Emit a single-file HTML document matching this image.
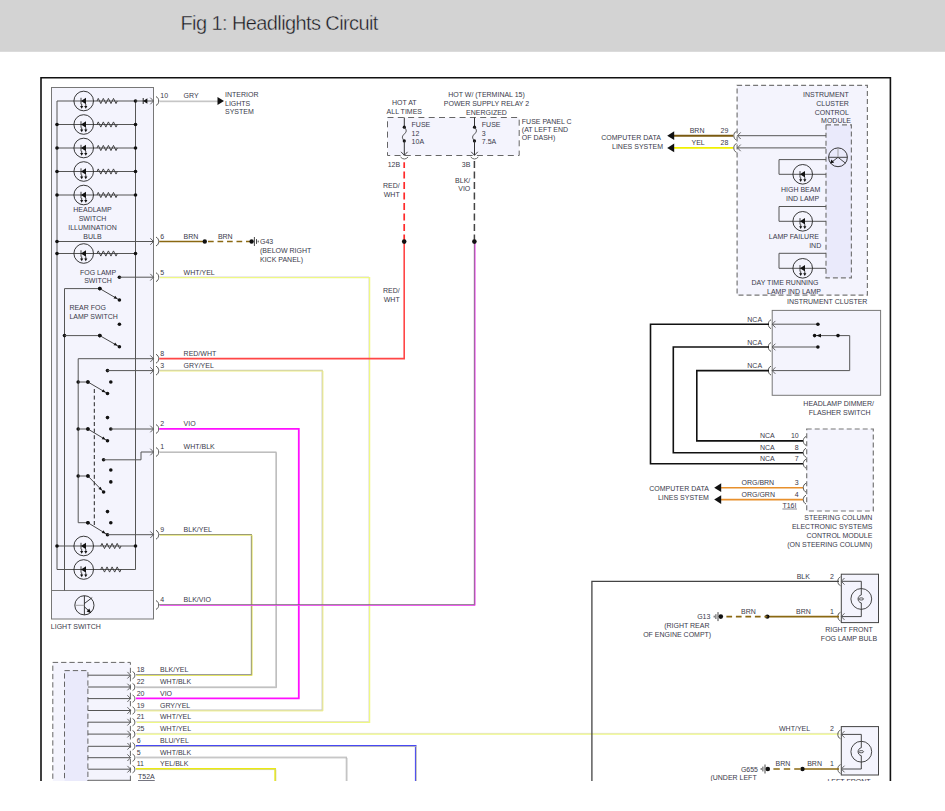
<!DOCTYPE html>
<html><head><meta charset="utf-8"><title>Headlights Circuit</title>
<style>html,body{margin:0;padding:0;background:#fff;width:945px;height:811px;overflow:hidden}
svg{display:block;font-family:"Liberation Sans",sans-serif}</style></head>
<body>
<svg width="945" height="811" viewBox="0 0 945 811" font-family="&quot;Liberation Sans&quot;, sans-serif">
<rect x="0" y="0" width="945" height="811" fill="#fff"/>
<rect x="0" y="0" width="945" height="51.8" fill="#d3d3d3"/>
<text x="180.5" y="30.2" font-size="20" letter-spacing="-0.6" fill="#1c1c24" stroke="#d3d3d3" stroke-width="0.4">Fig 1: Headlights Circuit</text>
<polyline points="41,781 41,77.7 890.4,77.7 890.4,781" fill="none" stroke="#111" stroke-width="1.6"/>
<rect x="51.5" y="87.5" width="102" height="531.5" fill="#f4f4fd" stroke="#777" stroke-width="1"/>
<line x1="51.5" y1="590.5" x2="153.5" y2="590.5" stroke="#777" stroke-width="1"/>
<line x1="57" y1="101" x2="57" y2="569.5" stroke="#555" stroke-width="1"/>
<line x1="135.5" y1="101" x2="135.5" y2="569.5" stroke="#555" stroke-width="1"/>
<line x1="57" y1="101" x2="135.5" y2="101" stroke="#555" stroke-width="1"/>
<circle cx="83.7" cy="101" r="9.8" fill="none" stroke="#222" stroke-width="0.9"/>
<path d="M81.0,97.8 V104.2" stroke="#111" stroke-width="0.8"/>
<path d="M81.0,101 L86.0,97.7 V104.3 Z" fill="#111"/>
<path d="M81.7,104 V106.5" stroke="#111" stroke-width="0.8"/>
<path d="M80.10000000000001,106 L83.3,106 L81.7,108.8 Z" fill="#111"/>
<path d="M85.8,104 V106.5" stroke="#111" stroke-width="0.8"/>
<path d="M84.2,106 L87.39999999999999,106 L85.8,108.8 Z" fill="#111"/>
<polyline points="97,101 98.27,98.4 100.81,103.6 103.34,98.4 105.88,103.6 108.42,98.4 110.96,103.6 113.49,98.4 116.03,103.6 117.3,101" fill="none" stroke="#333" stroke-width="0.9"/>
<line x1="57" y1="124.5" x2="135.5" y2="124.5" stroke="#555" stroke-width="1"/>
<circle cx="83.7" cy="124.5" r="9.8" fill="none" stroke="#222" stroke-width="0.9"/>
<path d="M81.0,121.3 V127.7" stroke="#111" stroke-width="0.8"/>
<path d="M81.0,124.5 L86.0,121.2 V127.8 Z" fill="#111"/>
<path d="M81.7,127.5 V130.0" stroke="#111" stroke-width="0.8"/>
<path d="M80.10000000000001,129.5 L83.3,129.5 L81.7,132.3 Z" fill="#111"/>
<path d="M85.8,127.5 V130.0" stroke="#111" stroke-width="0.8"/>
<path d="M84.2,129.5 L87.39999999999999,129.5 L85.8,132.3 Z" fill="#111"/>
<polyline points="97,124.5 98.27,121.9 100.81,127.1 103.34,121.9 105.88,127.1 108.42,121.9 110.96,127.1 113.49,121.9 116.03,127.1 117.3,124.5" fill="none" stroke="#333" stroke-width="0.9"/>
<circle cx="57" cy="124.5" r="1.8" fill="#111"/>
<circle cx="135.5" cy="124.5" r="1.8" fill="#111"/>
<line x1="57" y1="148" x2="135.5" y2="148" stroke="#555" stroke-width="1"/>
<circle cx="83.7" cy="148" r="9.8" fill="none" stroke="#222" stroke-width="0.9"/>
<path d="M81.0,144.8 V151.2" stroke="#111" stroke-width="0.8"/>
<path d="M81.0,148 L86.0,144.7 V151.3 Z" fill="#111"/>
<path d="M81.7,151 V153.5" stroke="#111" stroke-width="0.8"/>
<path d="M80.10000000000001,153 L83.3,153 L81.7,155.8 Z" fill="#111"/>
<path d="M85.8,151 V153.5" stroke="#111" stroke-width="0.8"/>
<path d="M84.2,153 L87.39999999999999,153 L85.8,155.8 Z" fill="#111"/>
<polyline points="97,148 98.27,145.4 100.81,150.6 103.34,145.4 105.88,150.6 108.42,145.4 110.96,150.6 113.49,145.4 116.03,150.6 117.3,148" fill="none" stroke="#333" stroke-width="0.9"/>
<circle cx="57" cy="148" r="1.8" fill="#111"/>
<circle cx="135.5" cy="148" r="1.8" fill="#111"/>
<line x1="57" y1="171.5" x2="135.5" y2="171.5" stroke="#555" stroke-width="1"/>
<circle cx="83.7" cy="171.5" r="9.8" fill="none" stroke="#222" stroke-width="0.9"/>
<path d="M81.0,168.3 V174.7" stroke="#111" stroke-width="0.8"/>
<path d="M81.0,171.5 L86.0,168.2 V174.8 Z" fill="#111"/>
<path d="M81.7,174.5 V177.0" stroke="#111" stroke-width="0.8"/>
<path d="M80.10000000000001,176.5 L83.3,176.5 L81.7,179.3 Z" fill="#111"/>
<path d="M85.8,174.5 V177.0" stroke="#111" stroke-width="0.8"/>
<path d="M84.2,176.5 L87.39999999999999,176.5 L85.8,179.3 Z" fill="#111"/>
<polyline points="97,171.5 98.27,168.9 100.81,174.1 103.34,168.9 105.88,174.1 108.42,168.9 110.96,174.1 113.49,168.9 116.03,174.1 117.3,171.5" fill="none" stroke="#333" stroke-width="0.9"/>
<circle cx="57" cy="171.5" r="1.8" fill="#111"/>
<circle cx="135.5" cy="171.5" r="1.8" fill="#111"/>
<line x1="57" y1="195" x2="135.5" y2="195" stroke="#555" stroke-width="1"/>
<circle cx="83.7" cy="195" r="9.8" fill="none" stroke="#222" stroke-width="0.9"/>
<path d="M81.0,191.8 V198.2" stroke="#111" stroke-width="0.8"/>
<path d="M81.0,195 L86.0,191.7 V198.3 Z" fill="#111"/>
<path d="M81.7,198 V200.5" stroke="#111" stroke-width="0.8"/>
<path d="M80.10000000000001,200 L83.3,200 L81.7,202.8 Z" fill="#111"/>
<path d="M85.8,198 V200.5" stroke="#111" stroke-width="0.8"/>
<path d="M84.2,200 L87.39999999999999,200 L85.8,202.8 Z" fill="#111"/>
<polyline points="97,195 98.27,192.4 100.81,197.6 103.34,192.4 105.88,197.6 108.42,192.4 110.96,197.6 113.49,192.4 116.03,197.6 117.3,195" fill="none" stroke="#333" stroke-width="0.9"/>
<circle cx="57" cy="195" r="1.8" fill="#111"/>
<circle cx="135.5" cy="195" r="1.8" fill="#111"/>
<line x1="57" y1="253.5" x2="135.5" y2="253.5" stroke="#555" stroke-width="1"/>
<circle cx="83.7" cy="253.5" r="9.8" fill="none" stroke="#222" stroke-width="0.9"/>
<path d="M81.0,250.3 V256.7" stroke="#111" stroke-width="0.8"/>
<path d="M81.0,253.5 L86.0,250.2 V256.8 Z" fill="#111"/>
<path d="M81.7,256.5 V259.0" stroke="#111" stroke-width="0.8"/>
<path d="M80.10000000000001,258.5 L83.3,258.5 L81.7,261.3 Z" fill="#111"/>
<path d="M85.8,256.5 V259.0" stroke="#111" stroke-width="0.8"/>
<path d="M84.2,258.5 L87.39999999999999,258.5 L85.8,261.3 Z" fill="#111"/>
<polyline points="97,253.5 98.27,250.9 100.81,256.1 103.34,250.9 105.88,256.1 108.42,250.9 110.96,256.1 113.49,250.9 116.03,256.1 117.3,253.5" fill="none" stroke="#333" stroke-width="0.9"/>
<circle cx="57" cy="253.5" r="1.8" fill="#111"/>
<circle cx="135.5" cy="253.5" r="1.8" fill="#111"/>
<line x1="57" y1="546" x2="135.5" y2="546" stroke="#555" stroke-width="1"/>
<circle cx="83.7" cy="546" r="9.8" fill="none" stroke="#222" stroke-width="0.9"/>
<path d="M81.0,542.8 V549.2" stroke="#111" stroke-width="0.8"/>
<path d="M81.0,546 L86.0,542.7 V549.3 Z" fill="#111"/>
<path d="M81.7,549 V551.5" stroke="#111" stroke-width="0.8"/>
<path d="M80.10000000000001,551 L83.3,551 L81.7,553.8 Z" fill="#111"/>
<path d="M85.8,549 V551.5" stroke="#111" stroke-width="0.8"/>
<path d="M84.2,551 L87.39999999999999,551 L85.8,553.8 Z" fill="#111"/>
<polyline points="100.7,546 101.97,543.4 104.51,548.6 107.04,543.4 109.58,548.6 112.12,543.4 114.66,548.6 117.19,543.4 119.73,548.6 121,546" fill="none" stroke="#333" stroke-width="0.9"/>
<circle cx="57" cy="546" r="1.8" fill="#111"/>
<circle cx="135.5" cy="546" r="1.8" fill="#111"/>
<line x1="57" y1="569.5" x2="135.5" y2="569.5" stroke="#555" stroke-width="1"/>
<circle cx="83.7" cy="569.5" r="9.8" fill="none" stroke="#222" stroke-width="0.9"/>
<path d="M81.0,566.3 V572.7" stroke="#111" stroke-width="0.8"/>
<path d="M81.0,569.5 L86.0,566.2 V572.8 Z" fill="#111"/>
<path d="M81.7,572.5 V575.0" stroke="#111" stroke-width="0.8"/>
<path d="M80.10000000000001,574.5 L83.3,574.5 L81.7,577.3 Z" fill="#111"/>
<path d="M85.8,572.5 V575.0" stroke="#111" stroke-width="0.8"/>
<path d="M84.2,574.5 L87.39999999999999,574.5 L85.8,577.3 Z" fill="#111"/>
<polyline points="100.7,569.5 101.97,566.9 104.51,572.1 107.04,566.9 109.58,572.1 112.12,566.9 114.66,572.1 117.19,566.9 119.73,572.1 121,569.5" fill="none" stroke="#333" stroke-width="0.9"/>
<circle cx="135.5" cy="101" r="1.8" fill="#111"/>
<line x1="135.5" y1="101" x2="153.5" y2="101" stroke="#555" stroke-width="1"/>
<path d="M143.2,98 V104" stroke="#111" stroke-width="0.9"/>
<path d="M143.2,101 L147.4,98.2 V103.8 Z" fill="#111"/>
<text x="92.5" y="212.3" text-anchor="middle" font-size="7" fill="#3a3a4a">HEADLAMP</text>
<text x="92.5" y="221.2" text-anchor="middle" font-size="7" fill="#3a3a4a">SWITCH</text>
<text x="92.5" y="230.1" text-anchor="middle" font-size="7" fill="#3a3a4a">ILLUMINATION</text>
<text x="92.5" y="239.0" text-anchor="middle" font-size="7" fill="#3a3a4a">BULB</text>
<line x1="57" y1="241.5" x2="153.5" y2="241.5" stroke="#555" stroke-width="1"/>
<circle cx="57" cy="241.5" r="1.8" fill="#111"/>
<text x="98" y="274.8" text-anchor="middle" font-size="7" fill="#3a3a4a">FOG LAMP</text>
<text x="98" y="283.0" text-anchor="middle" font-size="7" fill="#3a3a4a">SWITCH</text>
<circle cx="119.4" cy="277.2" r="1.8" fill="#111"/>
<line x1="119.4" y1="277.2" x2="153.5" y2="277.2" stroke="#555" stroke-width="1"/>
<line x1="64.5" y1="288.6" x2="64.5" y2="590.5" stroke="#555" stroke-width="1"/>
<line x1="64.5" y1="288.6" x2="99.8" y2="288.6" stroke="#555" stroke-width="1"/>
<circle cx="99.8" cy="288.6" r="1.8" fill="#111"/>
<line x1="99.8" y1="288.6" x2="119.4" y2="300" stroke="#333" stroke-width="0.9"/>
<path d="M117.33,298.79 L113.58,298.47 L115.19,295.70 Z" fill="#111"/>
<circle cx="99.8" cy="288.6" r="1.8" fill="#111"/>
<circle cx="119.4" cy="300" r="1.8" fill="#111"/>
<text x="69.4" y="310.0" font-size="7" fill="#3a3a4a">REAR FOG</text>
<text x="69.4" y="318.9" font-size="7" fill="#3a3a4a">LAMP SWITCH</text>
<circle cx="119.4" cy="324.2" r="1.8" fill="#111"/>
<circle cx="64.5" cy="335.6" r="1.8" fill="#111"/>
<line x1="64.5" y1="335.6" x2="99.8" y2="335.6" stroke="#555" stroke-width="1"/>
<circle cx="99.8" cy="335.6" r="1.8" fill="#111"/>
<line x1="99.8" y1="335.6" x2="119.4" y2="346.8" stroke="#333" stroke-width="0.9"/>
<path d="M117.32,345.61 L113.57,345.31 L115.16,342.53 Z" fill="#111"/>
<circle cx="99.8" cy="335.6" r="1.8" fill="#111"/>
<circle cx="119.4" cy="346.8" r="1.8" fill="#111"/>
<line x1="78.2" y1="358.7" x2="78.2" y2="522.7" stroke="#555" stroke-width="1"/>
<line x1="78.2" y1="358.7" x2="153.5" y2="358.7" stroke="#555" stroke-width="1"/>
<circle cx="107.5" cy="370.6" r="1.8" fill="#111"/>
<line x1="107.5" y1="370.6" x2="153.5" y2="370.6" stroke="#555" stroke-width="1"/>
<circle cx="110.8" cy="382" r="1.8" fill="#111"/>
<circle cx="78.2" cy="382" r="1.8" fill="#111"/>
<circle cx="87.9" cy="382" r="1.8" fill="#111"/>
<line x1="78.2" y1="382" x2="87.9" y2="382" stroke="#555" stroke-width="1"/>
<line x1="87.9" y1="382" x2="107.5" y2="393.5" stroke="#333" stroke-width="0.9"/>
<path d="M105.43,392.29 L101.69,391.94 L103.31,389.18 Z" fill="#111"/>
<circle cx="87.9" cy="382" r="1.8" fill="#111"/>
<circle cx="107.5" cy="393.5" r="1.8" fill="#111"/>
<line x1="94.3" y1="389" x2="94.3" y2="527" stroke="#222" stroke-width="1" stroke-dasharray="4,2.6"/>
<circle cx="107.5" cy="417.6" r="1.8" fill="#111"/>
<circle cx="78.2" cy="429" r="1.8" fill="#111"/>
<circle cx="87.9" cy="429" r="1.8" fill="#111"/>
<line x1="78.2" y1="429" x2="87.9" y2="429" stroke="#555" stroke-width="1"/>
<circle cx="110.8" cy="429" r="1.8" fill="#111"/>
<line x1="110.8" y1="429" x2="153.5" y2="429" stroke="#555" stroke-width="1"/>
<line x1="87.9" y1="429" x2="107.5" y2="440.8" stroke="#333" stroke-width="0.9"/>
<path d="M105.44,439.56 L101.71,439.18 L103.36,436.44 Z" fill="#111"/>
<circle cx="87.9" cy="429" r="1.8" fill="#111"/>
<circle cx="107.5" cy="440.8" r="1.8" fill="#111"/>
<circle cx="103.6" cy="459.8" r="1.8" fill="#111"/>
<polyline points="103.6,459.8 141,459.8 141,452 153.5,452" fill="none" stroke="#555" stroke-width="1"/>
<circle cx="110.8" cy="470" r="1.8" fill="#111"/>
<circle cx="110.8" cy="481.9" r="1.8" fill="#111"/>
<circle cx="78.2" cy="476" r="1.8" fill="#111"/>
<circle cx="87.9" cy="476" r="1.8" fill="#111"/>
<line x1="78.2" y1="476" x2="87.9" y2="476" stroke="#555" stroke-width="1"/>
<line x1="87.9" y1="476" x2="103.6" y2="492" stroke="#333" stroke-width="0.9"/>
<path d="M101.92,490.29 L98.40,488.98 L100.68,486.74 Z" fill="#111"/>
<circle cx="87.9" cy="476" r="1.8" fill="#111"/>
<circle cx="103.6" cy="492" r="1.8" fill="#111"/>
<circle cx="107.5" cy="511.6" r="1.8" fill="#111"/>
<circle cx="110.8" cy="522.7" r="1.8" fill="#111"/>
<line x1="78.2" y1="522.7" x2="87.9" y2="522.7" stroke="#555" stroke-width="1"/>
<circle cx="87.9" cy="522.7" r="1.8" fill="#111"/>
<line x1="87.9" y1="522.7" x2="107.5" y2="534.7" stroke="#333" stroke-width="0.9"/>
<path d="M105.45,533.45 L101.72,533.04 L103.39,530.31 Z" fill="#111"/>
<circle cx="87.9" cy="522.7" r="1.8" fill="#111"/>
<circle cx="107.5" cy="534.7" r="1.8" fill="#111"/>
<line x1="107.5" y1="534.7" x2="153.5" y2="534.7" stroke="#555" stroke-width="1"/>
<circle cx="84.4" cy="605.3" r="9.6" fill="none" stroke="#222" stroke-width="0.9"/>
<path d="M84.4,595.8 V614.8" stroke="#222" stroke-width="0.9" fill="none"/>
<path d="M75,605.3 H84.4" stroke="#999" stroke-width="0.9" fill="none"/>
<path d="M84.4,603.5 L92.2,597.6 M84.4,606.8 L89.5,611.4" stroke="#222" stroke-width="0.9" fill="none"/>
<path d="M91.2,613.2 L86.6,611.6 L89.3,608.6 Z" fill="#111"/>
<text x="50.8" y="629.2" font-size="7" fill="#3a3a4a">LIGHT SWITCH</text>
<polyline points="150.3,97.7 153.5,101 150.3,104.3" fill="none" stroke="#555" stroke-width="0.9"/>
<path d="M156,96.6 C159.6,98 159.6,104 156,105.4" fill="none" stroke="#444" stroke-width="0.9"/>
<text x="160.3" y="98.4" font-size="7" fill="#3a3a4a">10</text>
<text x="183.6" y="98.4" font-size="7" fill="#3a3a4a">GRY</text>
<polyline points="150.3,238.2 153.5,241.5 150.3,244.8" fill="none" stroke="#555" stroke-width="0.9"/>
<path d="M156,237.1 C159.6,238.5 159.6,244.5 156,245.9" fill="none" stroke="#444" stroke-width="0.9"/>
<text x="160.3" y="238.9" font-size="7" fill="#3a3a4a">6</text>
<text x="183.6" y="238.9" font-size="7" fill="#3a3a4a">BRN</text>
<polyline points="150.3,273.9 153.5,277.2 150.3,280.5" fill="none" stroke="#555" stroke-width="0.9"/>
<path d="M156,272.8 C159.6,274.2 159.6,280.2 156,281.59999999999997" fill="none" stroke="#444" stroke-width="0.9"/>
<text x="160.3" y="274.59999999999997" font-size="7" fill="#3a3a4a">5</text>
<text x="183.6" y="274.59999999999997" font-size="7" fill="#3a3a4a">WHT/YEL</text>
<polyline points="150.3,355.4 153.5,358.7 150.3,362.0" fill="none" stroke="#555" stroke-width="0.9"/>
<path d="M156,354.3 C159.6,355.7 159.6,361.7 156,363.09999999999997" fill="none" stroke="#444" stroke-width="0.9"/>
<text x="160.3" y="356.09999999999997" font-size="7" fill="#3a3a4a">8</text>
<text x="183.6" y="356.09999999999997" font-size="7" fill="#3a3a4a">RED/WHT</text>
<polyline points="150.3,367.3 153.5,370.6 150.3,373.90000000000003" fill="none" stroke="#555" stroke-width="0.9"/>
<path d="M156,366.20000000000005 C159.6,367.6 159.6,373.6 156,375.0" fill="none" stroke="#444" stroke-width="0.9"/>
<text x="160.3" y="368.0" font-size="7" fill="#3a3a4a">3</text>
<text x="183.6" y="368.0" font-size="7" fill="#3a3a4a">GRY/YEL</text>
<polyline points="150.3,425.7 153.5,429 150.3,432.3" fill="none" stroke="#555" stroke-width="0.9"/>
<path d="M156,424.6 C159.6,426 159.6,432 156,433.4" fill="none" stroke="#444" stroke-width="0.9"/>
<text x="160.3" y="426.4" font-size="7" fill="#3a3a4a">2</text>
<text x="183.6" y="426.4" font-size="7" fill="#3a3a4a">VIO</text>
<polyline points="150.3,448.7 153.5,452 150.3,455.3" fill="none" stroke="#555" stroke-width="0.9"/>
<path d="M156,447.6 C159.6,449 159.6,455 156,456.4" fill="none" stroke="#444" stroke-width="0.9"/>
<text x="160.3" y="449.4" font-size="7" fill="#3a3a4a">1</text>
<text x="183.6" y="449.4" font-size="7" fill="#3a3a4a">WHT/BLK</text>
<polyline points="150.3,531.4000000000001 153.5,534.7 150.3,538.0" fill="none" stroke="#555" stroke-width="0.9"/>
<path d="M156,530.3000000000001 C159.6,531.7 159.6,537.7 156,539.1" fill="none" stroke="#444" stroke-width="0.9"/>
<text x="160.3" y="532.1" font-size="7" fill="#3a3a4a">9</text>
<text x="183.6" y="532.1" font-size="7" fill="#3a3a4a">BLK/YEL</text>
<path d="M156,600.6 C159.6,602 159.6,608 156,609.4" fill="none" stroke="#444" stroke-width="0.9"/>
<text x="160.3" y="602.4" font-size="7" fill="#3a3a4a">4</text>
<text x="183.6" y="602.4" font-size="7" fill="#3a3a4a">BLK/VIO</text>
<polyline points="159.2,101 218,101" fill="none" stroke="#c8c8c8" stroke-width="1.2"/>
<polyline points="159.9,101.7 218.7,101.7" fill="none" stroke="#b0b0b0" stroke-width="0.7"/>
<path d="M224,101 L217.5,97 V105 Z" fill="#111"/>
<text x="225" y="97.2" font-size="7" fill="#3a3a4a">INTERIOR</text>
<text x="225" y="105.8" font-size="7" fill="#3a3a4a">LIGHTS</text>
<text x="225" y="114.4" font-size="7" fill="#3a3a4a">SYSTEM</text>
<line x1="159.2" y1="241.5" x2="204.8" y2="241.5" stroke="#8a6812" stroke-width="1.6"/>
<circle cx="204.8" cy="241.5" r="2.2" fill="#111"/>
<line x1="208" y1="241.5" x2="251.6" y2="241.5" stroke="#8a6812" stroke-width="1.6" stroke-dasharray="5.7,3.8"/>
<text x="217.9" y="238.9" font-size="7" fill="#3a3a4a">BRN</text>
<circle cx="251.6" cy="241.5" r="2.2" fill="#111"/>
<path d="M254.4,237.0 V246.0 M256.5,239.1 V243.9 M258.2,240.6 V242.4" stroke="#333" stroke-width="0.9"/>
<text x="260" y="244.1" font-size="7" fill="#3a3a4a">G43</text>
<text x="260" y="252.8" font-size="7" fill="#3a3a4a">(BELOW RIGHT</text>
<text x="260" y="261.5" font-size="7" fill="#3a3a4a">KICK PANEL)</text>
<polyline points="159.2,276.9 368.9,276.9 368.9,721.6 136,721.6" fill="none" stroke="#dcd6dc" stroke-width="0.9"/>
<polyline points="159.9,277.6 369.6,277.6 369.6,722.3 136.7,722.3" fill="none" stroke="#eef884" stroke-width="1.3"/>
<polyline points="159.2,358.6 404.2,358.6 404.2,241.6" fill="none" stroke="#ff4646" stroke-width="1.6"/>
<line x1="404.2" y1="241.6" x2="404.2" y2="162.3" stroke="#ff2a2a" stroke-width="1.7" stroke-dasharray="7,3.5"/>
<circle cx="404.2" cy="241.6" r="2.3" fill="#111"/>
<polyline points="159.2,370.3 322.2,370.3 322.2,710.2 136,710.2" fill="none" stroke="#c4c4c4" stroke-width="1.2"/>
<polyline points="159.9,371.0 322.9,371.0 322.9,710.9 136.7,710.9" fill="none" stroke="#eeee80" stroke-width="1.0"/>
<polyline points="159.2,428.8 298.8,428.8 298.8,698.4 136,698.4" fill="none" stroke="#ff10ff" stroke-width="1.8"/>
<polyline points="159.2,451.8 275.8,451.8 275.8,687 136,687" fill="none" stroke="#cdcdcd" stroke-width="1.3"/>
<polyline points="159.9,452.5 276.5,452.5 276.5,687.7 136.7,687.7" fill="none" stroke="#b4b4b4" stroke-width="0.8"/>
<polyline points="159.2,534.5 251.4,534.5 251.4,674.8 136,674.8" fill="none" stroke="#7c7c7c" stroke-width="1.1"/>
<polyline points="159.9,535.2 252.1,535.2 252.1,675.5 136.7,675.5" fill="none" stroke="#e4e466" stroke-width="1.0"/>
<polyline points="159.2,604.7 474.4,604.7 474.4,241.6" fill="none" stroke="#6a6a6a" stroke-width="1.1"/>
<polyline points="159.9,605.4 475.1,605.4 475.1,242.3" fill="none" stroke="#f050f0" stroke-width="1.0"/>
<line x1="474.4" y1="241.6" x2="474.4" y2="159.3" stroke="#444" stroke-width="1.5" stroke-dasharray="7,3.5"/>
<circle cx="474.4" cy="241.6" r="2.3" fill="#111"/>
<polyline points="136,733.4 839,733.4" fill="none" stroke="#dcd6dc" stroke-width="0.9"/>
<polyline points="136.7,734.1 839.7,734.1" fill="none" stroke="#eef884" stroke-width="1.3"/>
<polyline points="136,745.9 415.7,745.9 415.7,781" fill="none" stroke="#4848f4" stroke-width="1.6"/>
<polyline points="136.7,746.6 416.4,746.6 416.4,781.7" fill="none" stroke="#e8e890" stroke-width="0.6"/>
<polyline points="136,757.2 346.3,757.2 346.3,781" fill="none" stroke="#cdcdcd" stroke-width="1.3"/>
<polyline points="136.7,757.9 347.0,757.9 347.0,781.7" fill="none" stroke="#b4b4b4" stroke-width="0.8"/>
<polyline points="136,768.9 275.2,768.9 275.2,781" fill="none" stroke="#eaea10" stroke-width="1.7"/>
<polyline points="136.7,769.6 275.9,769.6 275.9,781.7" fill="none" stroke="#c8c8a0" stroke-width="0.6"/>
<rect x="52.8" y="662.4" width="77.6" height="130" fill="#f4f4fd" stroke="#666" stroke-width="1" stroke-dasharray="5.3,3"/>
<rect x="64.5" y="670.6" width="23.4" height="130" fill="#eaeafb" stroke="#666" stroke-width="1" stroke-dasharray="5.3,3"/>
<line x1="87.9" y1="675.2" x2="130.8" y2="675.2" stroke="#555" stroke-width="1"/>
<polyline points="127.39999999999999,671.9000000000001 130.6,675.2 127.39999999999999,678.5" fill="none" stroke="#555" stroke-width="0.9"/>
<path d="M132.6,671.6 C135.6,672.8000000000001 135.6,677.6 132.6,678.8000000000001" fill="none" stroke="#444" stroke-width="0.9"/>
<text x="136.7" y="672.3000000000001" font-size="7" fill="#3a3a4a">18</text>
<text x="160" y="672.3000000000001" font-size="7" fill="#3a3a4a">BLK/YEL</text>
<line x1="87.9" y1="687" x2="130.8" y2="687" stroke="#555" stroke-width="1"/>
<polyline points="127.39999999999999,683.7 130.6,687 127.39999999999999,690.3" fill="none" stroke="#555" stroke-width="0.9"/>
<path d="M132.6,683.4 C135.6,684.6 135.6,689.4 132.6,690.6" fill="none" stroke="#444" stroke-width="0.9"/>
<text x="136.7" y="684.1" font-size="7" fill="#3a3a4a">22</text>
<text x="160" y="684.1" font-size="7" fill="#3a3a4a">WHT/BLK</text>
<line x1="87.9" y1="698.6" x2="130.8" y2="698.6" stroke="#555" stroke-width="1"/>
<polyline points="127.39999999999999,695.3000000000001 130.6,698.6 127.39999999999999,701.9" fill="none" stroke="#555" stroke-width="0.9"/>
<path d="M132.6,695.0 C135.6,696.2 135.6,701.0 132.6,702.2" fill="none" stroke="#444" stroke-width="0.9"/>
<text x="136.7" y="695.7" font-size="7" fill="#3a3a4a">20</text>
<text x="160" y="695.7" font-size="7" fill="#3a3a4a">VIO</text>
<line x1="87.9" y1="710.5" x2="130.8" y2="710.5" stroke="#555" stroke-width="1"/>
<polyline points="127.39999999999999,707.2 130.6,710.5 127.39999999999999,713.8" fill="none" stroke="#555" stroke-width="0.9"/>
<path d="M132.6,706.9 C135.6,708.1 135.6,712.9 132.6,714.1" fill="none" stroke="#444" stroke-width="0.9"/>
<text x="136.7" y="707.6" font-size="7" fill="#3a3a4a">19</text>
<text x="160" y="707.6" font-size="7" fill="#3a3a4a">GRY/YEL</text>
<line x1="87.9" y1="722.2" x2="130.8" y2="722.2" stroke="#555" stroke-width="1"/>
<polyline points="127.39999999999999,718.9000000000001 130.6,722.2 127.39999999999999,725.5" fill="none" stroke="#555" stroke-width="0.9"/>
<path d="M132.6,718.6 C135.6,719.8000000000001 135.6,724.6 132.6,725.8000000000001" fill="none" stroke="#444" stroke-width="0.9"/>
<text x="136.7" y="719.3000000000001" font-size="7" fill="#3a3a4a">21</text>
<text x="160" y="719.3000000000001" font-size="7" fill="#3a3a4a">WHT/YEL</text>
<line x1="87.9" y1="734.1" x2="130.8" y2="734.1" stroke="#555" stroke-width="1"/>
<polyline points="127.39999999999999,730.8000000000001 130.6,734.1 127.39999999999999,737.4" fill="none" stroke="#555" stroke-width="0.9"/>
<path d="M132.6,730.5 C135.6,731.7 135.6,736.5 132.6,737.7" fill="none" stroke="#444" stroke-width="0.9"/>
<text x="136.7" y="731.2" font-size="7" fill="#3a3a4a">25</text>
<text x="160" y="731.2" font-size="7" fill="#3a3a4a">WHT/YEL</text>
<line x1="87.9" y1="746.3" x2="130.8" y2="746.3" stroke="#555" stroke-width="1"/>
<polyline points="127.39999999999999,743.0 130.6,746.3 127.39999999999999,749.5999999999999" fill="none" stroke="#555" stroke-width="0.9"/>
<path d="M132.6,742.6999999999999 C135.6,743.9 135.6,748.6999999999999 132.6,749.9" fill="none" stroke="#444" stroke-width="0.9"/>
<text x="136.7" y="743.4" font-size="7" fill="#3a3a4a">6</text>
<text x="160" y="743.4" font-size="7" fill="#3a3a4a">BLU/YEL</text>
<line x1="87.9" y1="757.7" x2="130.8" y2="757.7" stroke="#555" stroke-width="1"/>
<polyline points="127.39999999999999,754.4000000000001 130.6,757.7 127.39999999999999,761.0" fill="none" stroke="#555" stroke-width="0.9"/>
<path d="M132.6,754.1 C135.6,755.3000000000001 135.6,760.1 132.6,761.3000000000001" fill="none" stroke="#444" stroke-width="0.9"/>
<text x="136.7" y="754.8000000000001" font-size="7" fill="#3a3a4a">5</text>
<text x="160" y="754.8000000000001" font-size="7" fill="#3a3a4a">WHT/BLK</text>
<line x1="87.9" y1="769.2" x2="130.8" y2="769.2" stroke="#555" stroke-width="1"/>
<polyline points="127.39999999999999,765.9000000000001 130.6,769.2 127.39999999999999,772.5" fill="none" stroke="#555" stroke-width="0.9"/>
<path d="M132.6,765.6 C135.6,766.8000000000001 135.6,771.6 132.6,772.8000000000001" fill="none" stroke="#444" stroke-width="0.9"/>
<text x="136.7" y="766.3000000000001" font-size="7" fill="#3a3a4a">11</text>
<text x="160" y="766.3000000000001" font-size="7" fill="#3a3a4a">YEL/BLK</text>
<text x="138" y="779.3" font-size="7" fill="#3a3a4a"><tspan text-decoration="underline">T52A</tspan></text>
<rect x="387.5" y="117.5" width="131.7" height="38" fill="#f4f4fd" stroke="#666" stroke-width="1" stroke-dasharray="6,4.3"/>
<line x1="404.3" y1="117.5" x2="404.3" y2="127.2" stroke="#333" stroke-width="1"/>
<circle cx="404.3" cy="127.2" r="1.6" fill="#111"/>
<path d="M404.3,127.2 C407.3,130.5 406.3,132 404.3,134 C402.3,136 401.3,137.5 404.3,140.9" fill="none" stroke="#333" stroke-width="0.9"/>
<circle cx="404.3" cy="140.9" r="1.6" fill="#111"/>
<line x1="404.3" y1="140.9" x2="404.3" y2="155.3" stroke="#333" stroke-width="1"/>
<polyline points="401.0,151.8 404.3,155.3 407.6,151.8" fill="none" stroke="#333" stroke-width="0.9"/>
<path d="M400.5,157 Q404.3,161 408.1,157" fill="none" stroke="#555" stroke-width="0.9"/>
<text x="411.6" y="127.0" font-size="7" fill="#3a3a4a">FUSE</text>
<text x="411.6" y="135.6" font-size="7" fill="#3a3a4a">12</text>
<text x="411.6" y="144.2" font-size="7" fill="#3a3a4a">10A</text>
<line x1="474.5" y1="117.5" x2="474.5" y2="127.2" stroke="#333" stroke-width="1"/>
<circle cx="474.5" cy="127.2" r="1.6" fill="#111"/>
<path d="M474.5,127.2 C477.5,130.5 476.5,132 474.5,134 C472.5,136 471.5,137.5 474.5,140.9" fill="none" stroke="#333" stroke-width="0.9"/>
<circle cx="474.5" cy="140.9" r="1.6" fill="#111"/>
<line x1="474.5" y1="140.9" x2="474.5" y2="155.3" stroke="#333" stroke-width="1"/>
<polyline points="471.2,151.8 474.5,155.3 477.8,151.8" fill="none" stroke="#333" stroke-width="0.9"/>
<path d="M470.7,157 Q474.5,161 478.3,157" fill="none" stroke="#555" stroke-width="0.9"/>
<text x="481.8" y="127.0" font-size="7" fill="#3a3a4a">FUSE</text>
<text x="481.8" y="135.6" font-size="7" fill="#3a3a4a">3</text>
<text x="481.8" y="144.2" font-size="7" fill="#3a3a4a">7.5A</text>
<text x="387.7" y="167.2" font-size="7" fill="#3a3a4a">12B</text>
<text x="470.3" y="167.2" text-anchor="end" font-size="7" fill="#3a3a4a">3B</text>
<text x="399.7" y="188.1" text-anchor="end" font-size="7" fill="#3a3a4a">RED/</text>
<text x="399.7" y="197.2" text-anchor="end" font-size="7" fill="#3a3a4a">WHT</text>
<text x="470.3" y="182.5" text-anchor="end" font-size="7" fill="#3a3a4a">BLK/</text>
<text x="470.3" y="191.4" text-anchor="end" font-size="7" fill="#3a3a4a">VIO</text>
<text x="399.7" y="293.3" text-anchor="end" font-size="7" fill="#3a3a4a">RED/</text>
<text x="399.7" y="302.1" text-anchor="end" font-size="7" fill="#3a3a4a">WHT</text>
<text x="404.3" y="105.0" text-anchor="middle" font-size="7" fill="#3a3a4a">HOT AT</text>
<text x="404.3" y="113.9" text-anchor="middle" font-size="7" fill="#3a3a4a">ALL TIMES</text>
<text x="486.5" y="97.1" text-anchor="middle" font-size="7" fill="#3a3a4a">HOT W/ (TERMINAL 15)</text>
<text x="486.5" y="106.0" text-anchor="middle" font-size="7" fill="#3a3a4a">POWER SUPPLY RELAY 2</text>
<text x="486.5" y="114.9" text-anchor="middle" font-size="7" fill="#3a3a4a">ENERGIZED</text>
<text x="521.8" y="123.6" font-size="7" fill="#3a3a4a">FUSE PANEL C</text>
<text x="521.8" y="131.8" font-size="7" fill="#3a3a4a">(AT LEFT END</text>
<text x="521.8" y="140.0" font-size="7" fill="#3a3a4a">OF DASH)</text>
<rect x="737.1" y="85.4" width="130.3" height="209.8" fill="#f4f4fd" stroke="#777" stroke-width="1.2" stroke-dasharray="5,3"/>
<rect x="826" y="124.8" width="25.4" height="153.1" fill="#eaeafb" stroke="#777" stroke-width="1.2" stroke-dasharray="5,3"/>
<text x="848.9" y="97.1" text-anchor="end" font-size="7" fill="#3a3a4a">INSTRUMENT</text>
<text x="848.9" y="105.8" text-anchor="end" font-size="7" fill="#3a3a4a">CLUSTER</text>
<text x="848.9" y="114.5" text-anchor="end" font-size="7" fill="#3a3a4a">CONTROL</text>
<text x="851" y="123" text-anchor="end" font-size="7" fill="#3a3a4a">MODULE</text>
<line x1="673.6" y1="135.7" x2="733.3" y2="135.7" stroke="#7a5a10" stroke-width="1.9"/>
<path d="M667.2,135.7 L674.2,131.29999999999998 V140.1 Z" fill="#111"/>
<path d="M736.5,131.29999999999998 C732.9,132.7 732.9,138.7 736.5,140.1" fill="none" stroke="#444" stroke-width="0.9"/>
<polyline points="740.7,132.39999999999998 737.5,135.7 740.7,139.0" fill="none" stroke="#555" stroke-width="0.9"/>
<line x1="737.5" y1="135.7" x2="826" y2="135.7" stroke="#555" stroke-width="1"/>
<text x="689.7" y="132.5" font-size="7" fill="#3a3a4a">BRN</text>
<text x="720.6" y="132.5" font-size="7" fill="#3a3a4a">29</text>
<line x1="673.6" y1="147.9" x2="733.3" y2="147.9" stroke="#f0f000" stroke-width="1.9"/>
<path d="M667.2,147.9 L674.2,143.5 V152.3 Z" fill="#111"/>
<path d="M736.5,143.5 C732.9,144.9 732.9,150.9 736.5,152.3" fill="none" stroke="#444" stroke-width="0.9"/>
<polyline points="740.7,144.6 737.5,147.9 740.7,151.20000000000002" fill="none" stroke="#555" stroke-width="0.9"/>
<line x1="737.5" y1="147.9" x2="826" y2="147.9" stroke="#555" stroke-width="1"/>
<text x="691.5" y="144.70000000000002" font-size="7" fill="#3a3a4a">YEL</text>
<text x="720.6" y="144.70000000000002" font-size="7" fill="#3a3a4a">28</text>
<text x="660.9" y="139.8" text-anchor="end" font-size="7" fill="#3a3a4a">COMPUTER DATA</text>
<text x="663" y="149" text-anchor="end" font-size="7" fill="#3a3a4a">LINES SYSTEM</text>
<circle cx="838" cy="157.3" r="9.4" fill="none" stroke="#222" stroke-width="0.9"/>
<path d="M828.5,157.3 H847.4 M838,157.3 L845.5,163.2" stroke="#333" stroke-width="0.9" fill="none"/>
<path d="M838,148 V157.3" stroke="#999" stroke-width="0.9" fill="none"/>
<path d="M838,157.3 L832.5,161.5" stroke="#333" stroke-width="0.9" fill="none"/>
<path d="M830.2,163.4 L831.4,159.6 L834.2,162.4 Z" fill="#111"/>
<polyline points="826,159.6 779,159.6 779,174.3 826,174.3" fill="none" stroke="#555" stroke-width="1"/>
<circle cx="802.7" cy="174.3" r="9.8" fill="none" stroke="#222" stroke-width="0.9"/>
<path d="M800.0,171.10000000000002 V177.5" stroke="#111" stroke-width="0.8"/>
<path d="M800.0,174.3 L805.0,171.0 V177.60000000000002 Z" fill="#111"/>
<path d="M800.7,177.3 V179.8" stroke="#111" stroke-width="0.8"/>
<path d="M799.1,179.3 L802.3000000000001,179.3 L800.7,182.10000000000002 Z" fill="#111"/>
<path d="M804.8,177.3 V179.8" stroke="#111" stroke-width="0.8"/>
<path d="M803.1999999999999,179.3 L806.4,179.3 L804.8,182.10000000000002 Z" fill="#111"/>
<polyline points="826,206.5 779,206.5 779,221.3 826,221.3" fill="none" stroke="#555" stroke-width="1"/>
<circle cx="802.7" cy="221.3" r="9.8" fill="none" stroke="#222" stroke-width="0.9"/>
<path d="M800.0,218.10000000000002 V224.5" stroke="#111" stroke-width="0.8"/>
<path d="M800.0,221.3 L805.0,218.0 V224.60000000000002 Z" fill="#111"/>
<path d="M800.7,224.3 V226.8" stroke="#111" stroke-width="0.8"/>
<path d="M799.1,226.3 L802.3000000000001,226.3 L800.7,229.10000000000002 Z" fill="#111"/>
<path d="M804.8,224.3 V226.8" stroke="#111" stroke-width="0.8"/>
<path d="M803.1999999999999,226.3 L806.4,226.3 L804.8,229.10000000000002 Z" fill="#111"/>
<polyline points="826,253.3 779,253.3 779,268.3 826,268.3" fill="none" stroke="#555" stroke-width="1"/>
<circle cx="802.7" cy="268.3" r="9.8" fill="none" stroke="#222" stroke-width="0.9"/>
<path d="M800.0,265.1 V271.5" stroke="#111" stroke-width="0.8"/>
<path d="M800.0,268.3 L805.0,265.0 V271.6 Z" fill="#111"/>
<path d="M800.7,271.3 V273.8" stroke="#111" stroke-width="0.8"/>
<path d="M799.1,273.3 L802.3000000000001,273.3 L800.7,276.1 Z" fill="#111"/>
<path d="M804.8,271.3 V273.8" stroke="#111" stroke-width="0.8"/>
<path d="M803.1999999999999,273.3 L806.4,273.3 L804.8,276.1 Z" fill="#111"/>
<text x="800.6" y="192.1" text-anchor="middle" font-size="7" fill="#3a3a4a">HIGH BEAM</text>
<text x="802.6" y="201" text-anchor="middle" font-size="7" fill="#3a3a4a">IND LAMP</text>
<text x="818.9" y="239.1" text-anchor="end" font-size="7" fill="#3a3a4a">LAMP FAILURE</text>
<text x="821.2" y="248" text-anchor="end" font-size="7" fill="#3a3a4a">IND</text>
<text x="785" y="285.1" text-anchor="middle" font-size="7" fill="#3a3a4a">DAY TIME RUNNING</text>
<text x="794" y="293.7" text-anchor="middle" font-size="7" fill="#3a3a4a">LAMP IND LAMP</text>
<text x="867.4" y="304.1" text-anchor="end" font-size="7" fill="#3a3a4a">INSTRUMENT CLUSTER</text>
<rect x="772.2" y="310.4" width="108.4" height="84.9" fill="#f4f4fd" stroke="#777" stroke-width="1"/>
<path d="M771,319.8 C767.4,321.2 767.4,327.2 771,328.59999999999997" fill="none" stroke="#444" stroke-width="0.9"/>
<polyline points="775.4000000000001,320.9 772.2,324.2 775.4000000000001,327.5" fill="none" stroke="#555" stroke-width="0.9"/>
<text x="747.3" y="321.9" font-size="7" fill="#3a3a4a">NCA</text>
<path d="M771,342.6 C767.4,344 767.4,350 771,351.4" fill="none" stroke="#444" stroke-width="0.9"/>
<polyline points="775.4000000000001,343.7 772.2,347 775.4000000000001,350.3" fill="none" stroke="#555" stroke-width="0.9"/>
<text x="747.3" y="344.7" font-size="7" fill="#3a3a4a">NCA</text>
<path d="M771,366.20000000000005 C767.4,367.6 767.4,373.6 771,375.0" fill="none" stroke="#444" stroke-width="0.9"/>
<polyline points="775.4000000000001,367.3 772.2,370.6 775.4000000000001,373.90000000000003" fill="none" stroke="#555" stroke-width="0.9"/>
<text x="747.3" y="368.3" font-size="7" fill="#3a3a4a">NCA</text>
<line x1="772.2" y1="324.2" x2="817.9" y2="324.2" stroke="#555" stroke-width="1"/>
<circle cx="817.9" cy="324.2" r="1.8" fill="#111"/>
<line x1="772.2" y1="347" x2="817.9" y2="347" stroke="#555" stroke-width="1"/>
<circle cx="817.9" cy="347" r="1.8" fill="#111"/>
<polyline points="772.2,370.6 849.7,370.6 849.7,335.6 838,335.6" fill="none" stroke="#555" stroke-width="1"/>
<line x1="814.6" y1="335.6" x2="838" y2="335.6" stroke="#555" stroke-width="1"/>
<path d="M816.3,335.6 L821,333.7 V337.5 Z" fill="#111"/>
<circle cx="838" cy="335.6" r="1.8" fill="#111"/>
<circle cx="814.6" cy="335.6" r="1.8" fill="#111"/>
<text x="838.7" y="406.2" text-anchor="middle" font-size="7" fill="#3a3a4a">HEADLAMP DIMMER/</text>
<text x="839.7" y="415.1" text-anchor="middle" font-size="7" fill="#3a3a4a">FLASHER SWITCH</text>
<polyline points="769,324.2 650.5,324.2 650.5,463.7 803,463.7" fill="none" stroke="#111" stroke-width="1.6"/>
<polyline points="769,347 673.3,347 673.3,452.7 803,452.7" fill="none" stroke="#111" stroke-width="1.6"/>
<polyline points="769,370.6 696.8,370.6 696.8,440.9 803,440.9" fill="none" stroke="#111" stroke-width="1.6"/>
<rect x="806.7" y="429" width="66.6" height="82" fill="#f4f4fd" stroke="#777" stroke-width="1.2" stroke-dasharray="5,3"/>
<path d="M806,436.5 C802.4,437.9 802.4,443.9 806,445.29999999999995" fill="none" stroke="#444" stroke-width="0.9"/>
<text x="759.9" y="438.2" font-size="7" fill="#3a3a4a">NCA</text>
<text x="798.7" y="438.2" text-anchor="end" font-size="7" fill="#3a3a4a">10</text>
<path d="M806,448.3 C802.4,449.7 802.4,455.7 806,457.09999999999997" fill="none" stroke="#444" stroke-width="0.9"/>
<text x="759.9" y="450.0" font-size="7" fill="#3a3a4a">NCA</text>
<text x="798.7" y="450.0" text-anchor="end" font-size="7" fill="#3a3a4a">8</text>
<path d="M806,459.3 C802.4,460.7 802.4,466.7 806,468.09999999999997" fill="none" stroke="#444" stroke-width="0.9"/>
<text x="759.9" y="461.0" font-size="7" fill="#3a3a4a">NCA</text>
<text x="798.7" y="461.0" text-anchor="end" font-size="7" fill="#3a3a4a">7</text>
<line x1="720.7" y1="487.7" x2="803" y2="487.7" stroke="#e8902c" stroke-width="1.6"/>
<path d="M714.2,487.7 L721.2,483.3 V492.09999999999997 Z" fill="#111"/>
<path d="M806,483.3 C802.4,484.7 802.4,490.7 806,492.09999999999997" fill="none" stroke="#444" stroke-width="0.9"/>
<text x="741.5" y="485.0" font-size="7" fill="#3a3a4a">ORG/BRN</text>
<text x="798.7" y="485.0" text-anchor="end" font-size="7" fill="#3a3a4a">3</text>
<line x1="720.7" y1="499.6" x2="803" y2="499.6" stroke="#e8902c" stroke-width="1.6"/>
<path d="M714.2,499.6 L721.2,495.20000000000005 V504.0 Z" fill="#111"/>
<path d="M806,495.20000000000005 C802.4,496.6 802.4,502.6 806,504.0" fill="none" stroke="#444" stroke-width="0.9"/>
<text x="741.5" y="496.90000000000003" font-size="7" fill="#3a3a4a">ORG/GRN</text>
<text x="798.7" y="496.90000000000003" text-anchor="end" font-size="7" fill="#3a3a4a">4</text>
<text x="708.9" y="490.9" text-anchor="end" font-size="7" fill="#3a3a4a">COMPUTER DATA</text>
<text x="708.9" y="499.8" text-anchor="end" font-size="7" fill="#3a3a4a">LINES SYSTEM</text>
<text x="782.4" y="507.8" font-size="7" fill="#3a3a4a">T16I</text>
<line x1="782.4" y1="509" x2="797" y2="509" stroke="#3a3a4a" stroke-width="0.6"/>
<text x="872.4" y="520.2" text-anchor="end" font-size="7" fill="#3a3a4a">STEERING COLUMN</text>
<text x="872.4" y="529.2" text-anchor="end" font-size="7" fill="#3a3a4a">ELECTRONIC SYSTEMS</text>
<text x="872.4" y="538.2" text-anchor="end" font-size="7" fill="#3a3a4a">CONTROL MODULE</text>
<text x="872.4" y="547.2" text-anchor="end" font-size="7" fill="#3a3a4a">(ON STEERING COLUMN)</text>
<polyline points="591.9,781 591.9,581.3 839,581.3" fill="none" stroke="#444" stroke-width="1.3"/>
<rect x="841.3" y="574.2" width="37.2" height="48.39999999999998" fill="#f4f4fd" stroke="#444" stroke-width="1"/>
<path d="M842,581.3 H861.3 V594.95 C857,595.95 857,601.95 861.3,602.95 V616.6 H842" fill="none" stroke="#333" stroke-width="0.9"/>
<circle cx="861.3" cy="598.95" r="10.4" fill="none" stroke="#333" stroke-width="0.9"/>
<ellipse cx="861.2" cy="598.95" rx="2.4" ry="1.1" fill="none" stroke="#333" stroke-width="0.8"/>
<path d="M840.5,576.9 C836.9,578.3 836.9,584.3 840.5,585.6999999999999" fill="none" stroke="#444" stroke-width="0.9"/>
<polyline points="844.5,578.0 841.3,581.3 844.5,584.5999999999999" fill="none" stroke="#555" stroke-width="0.9"/>
<path d="M840.5,612.2 C836.9,613.6 836.9,619.6 840.5,621.0" fill="none" stroke="#444" stroke-width="0.9"/>
<polyline points="844.5,613.3000000000001 841.3,616.6 844.5,619.9" fill="none" stroke="#555" stroke-width="0.9"/>
<text x="796.7" y="578.8" font-size="7" fill="#3a3a4a">BLK</text>
<text x="829.9" y="578.8" font-size="7" fill="#3a3a4a">2</text>
<line x1="767.3" y1="616.6" x2="839" y2="616.6" stroke="#8a6812" stroke-width="1.6"/>
<circle cx="767.3" cy="616.6" r="2.2" fill="#111"/>
<line x1="726.4" y1="616.6" x2="767.3" y2="616.6" stroke="#8a6812" stroke-width="1.6" stroke-dasharray="5.7,3.8"/>
<circle cx="720.8" cy="616.6" r="2.3" fill="#111"/>
<path d="M718,612.1 V621.1 M715.9,614.2 V619.0 M714.2,615.7 V617.5" stroke="#333" stroke-width="0.9"/>
<text x="710.4" y="619.2" text-anchor="end" font-size="7" fill="#3a3a4a">G13</text>
<text x="741" y="613.8" font-size="7" fill="#3a3a4a">BRN</text>
<text x="796" y="613.8" font-size="7" fill="#3a3a4a">BRN</text>
<text x="830" y="613.8" font-size="7" fill="#3a3a4a">1</text>
<text x="709.5" y="628" text-anchor="end" font-size="7" fill="#3a3a4a">(RIGHT REAR</text>
<text x="711.2" y="637.1" text-anchor="end" font-size="7" fill="#3a3a4a">OF ENGINE COMPT)</text>
<text x="849" y="632.0" text-anchor="middle" font-size="7" fill="#3a3a4a">RIGHT FRONT</text>
<text x="849" y="641.2" text-anchor="middle" font-size="7" fill="#3a3a4a">FOG LAMP BULB</text>
<rect x="841.3" y="726.6" width="37.2" height="48.39999999999998" fill="#f4f4fd" stroke="#444" stroke-width="1"/>
<path d="M842,734.4 H861.3 V747.7 C857,748.7 857,754.7 861.3,755.7 V769 H842" fill="none" stroke="#333" stroke-width="0.9"/>
<circle cx="861.3" cy="751.7" r="10.4" fill="none" stroke="#333" stroke-width="0.9"/>
<ellipse cx="861.2" cy="751.7" rx="2.4" ry="1.1" fill="none" stroke="#333" stroke-width="0.8"/>
<path d="M840.5,730.0 C836.9,731.4 836.9,737.4 840.5,738.8" fill="none" stroke="#444" stroke-width="0.9"/>
<polyline points="844.5,731.1 841.3,734.4 844.5,737.6999999999999" fill="none" stroke="#555" stroke-width="0.9"/>
<path d="M840.5,764.6 C836.9,766 836.9,772 840.5,773.4" fill="none" stroke="#444" stroke-width="0.9"/>
<polyline points="844.5,765.7 841.3,769 844.5,772.3" fill="none" stroke="#555" stroke-width="0.9"/>
<text x="779" y="731" font-size="7" fill="#3a3a4a">WHT/YEL</text>
<text x="829.9" y="731" font-size="7" fill="#3a3a4a">2</text>
<line x1="802.5" y1="769" x2="839" y2="769" stroke="#8a6812" stroke-width="1.6"/>
<circle cx="802.5" cy="769" r="2.2" fill="#111"/>
<line x1="773.4" y1="769" x2="802.5" y2="769" stroke="#8a6812" stroke-width="1.6" stroke-dasharray="6.4,4"/>
<circle cx="767.8" cy="769" r="2.3" fill="#111"/>
<path d="M765,764.5 V773.5 M762.9,766.6 V771.4 M761.2,768.1 V769.9" stroke="#333" stroke-width="0.9"/>
<text x="758" y="771.6" text-anchor="end" font-size="7" fill="#3a3a4a">G655</text>
<text x="775.5" y="766" font-size="7" fill="#3a3a4a">BRN</text>
<text x="807.2" y="766" font-size="7" fill="#3a3a4a">BRN</text>
<text x="830" y="766" font-size="7" fill="#3a3a4a">1</text>
<text x="710.4" y="779.5" font-size="7" fill="#3a3a4a">(UNDER LEFT</text>
<text x="849" y="784.4" text-anchor="middle" font-size="7" fill="#3a3a4a">LEFT FRONT</text>
<line x1="87.9" y1="780.3" x2="130.6" y2="780.3" stroke="#666" stroke-width="1"/>
<rect x="0" y="781" width="945" height="30" fill="#fff"/>
</svg>
</body></html>
